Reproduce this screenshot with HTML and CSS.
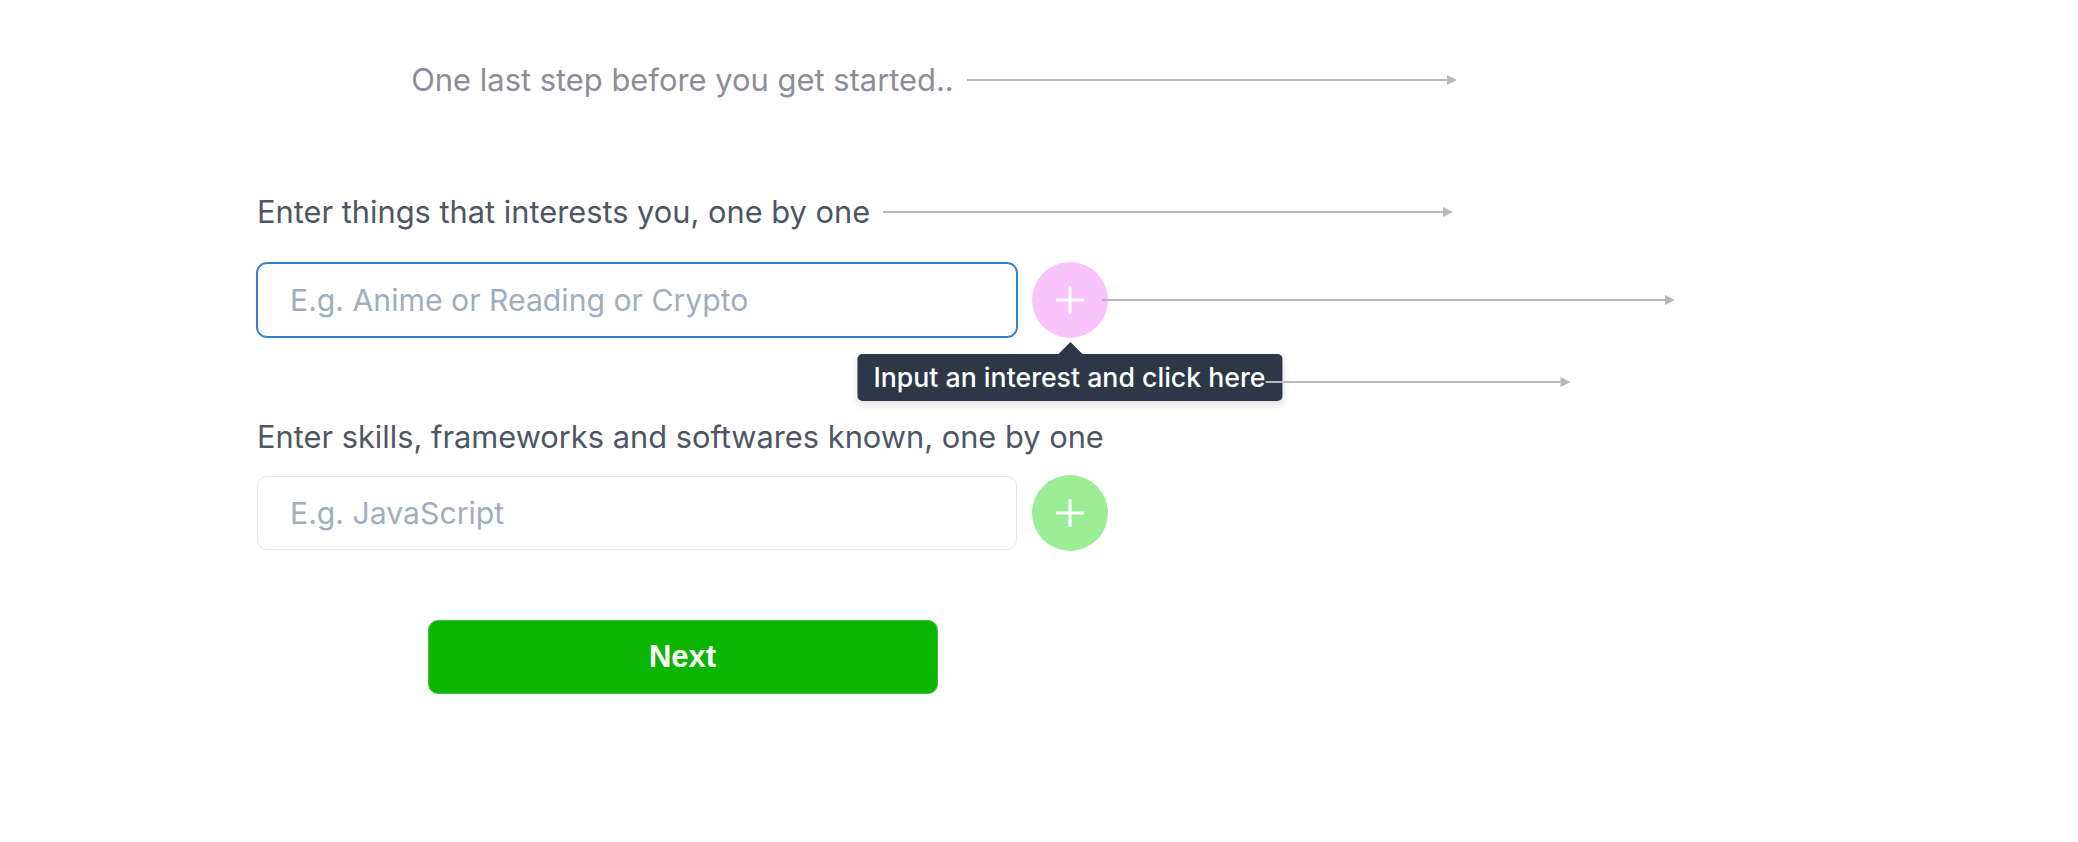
FILE: index.html
```html
<!DOCTYPE html>
<html lang="en">
<head>
<meta charset="utf-8">
<title>One last step</title>
<link rel="stylesheet" href="styles.css">
</head>
<body>
<main class="page">
  <form class="form" onsubmit="return false">
    <h2 class="intro"><span class="anchor">One last step before you get started..<span class="arrow arrow-intro"><i class="arrow-line"></i><i class="arrow-head"></i></span></span></h2>

    <section class="field field-interests">
      <label class="field-label" for="interest"><span class="anchor">Enter things that interests you, one by one<span class="arrow arrow-label"><i class="arrow-line"></i><i class="arrow-head"></i></span></span></label>
      <div class="field-row">
        <input id="interest" class="text-input is-focused" type="text" placeholder="E.g. Anime or Reading or Crypto">
        <button type="button" class="add-btn add-pink" aria-label="Add interest">
          <svg viewBox="0 0 30 30" width="30" height="30"><path d="M15 1v28M1 15h28" stroke="#fff" stroke-width="3" fill="none"/></svg>
          <span class="arrow arrow-btn"><i class="arrow-line"></i><i class="arrow-head"></i></span>
          <span class="tooltip" role="tooltip">Input an interest and click here<span class="arrow arrow-tip"><i class="arrow-line"></i><i class="arrow-head"></i></span></span>
        </button>
      </div>
    </section>

    <section class="field field-skills">
      <label class="field-label" for="skill">Enter skills, frameworks and softwares known, one by one</label>
      <div class="field-row">
        <input id="skill" class="text-input" type="text" placeholder="E.g. JavaScript">
        <button type="button" class="add-btn add-green" aria-label="Add skill">
          <svg viewBox="0 0 30 30" width="30" height="30"><path d="M15 1v28M1 15h28" stroke="#fff" stroke-width="3" fill="none"/></svg>
        </button>
      </div>
    </section>

    <div class="actions">
      <button type="submit" class="next-btn">Next</button>
    </div>
  </form>
</main>
</body>
</html>
```
FILE: styles.css
```css
* { box-sizing: border-box; }

html, body {
  margin: 0;
  padding: 0;
  background: #ffffff;
}

body {
  font-family: Inter, "Noto Sans", sans-serif;
  color: #4a5568;
}

.page {
  padding: 60px 0 0 257px;
}

.form {
  width: 851px;
  display: flex;
  flex-direction: column;
}

.intro {
  margin: 0;
  text-align: center;
  font-size: 30.9px;
  font-weight: 400;
  line-height: 40px;
  color: #8b8e97;
  white-space: nowrap;
}

.anchor {
  position: relative;
  display: inline-block;
  white-space: nowrap;
}

/* annotation arrows */
.arrow {
  position: absolute;
  display: flex;
  align-items: center;
  height: 12px;
  pointer-events: none;
}
.arrow-line {
  flex: 1;
  height: 2px;
  background: #b9b9b9;
}
.arrow-head {
  width: 0;
  height: 0;
  border-left: 10px solid #b9b9b9;
  border-top: 5px solid transparent;
  border-bottom: 5px solid transparent;
}
.arrow-intro {
  left: calc(100% + 13px);
  top: 50%;
  margin-top: -6px;
  width: 490px;
}
.arrow-label {
  left: calc(100% + 13px);
  top: 50%;
  margin-top: -6px;
  width: 570px;
}
.arrow-btn {
  left: calc(100% - 6px);
  top: 50%;
  margin-top: -6px;
  width: 573px;
}
.arrow-tip {
  left: calc(100% - 17px);
  top: 50%;
  margin-top: -2px;
  width: 305px;
}

.field {
  display: flex;
  flex-direction: column;
}
.field-interests { margin-top: 92px; }
.field-skills { margin-top: 79px; }

.field-label {
  font-size: 30.8px;
  line-height: 40px;
  color: #4f5564;
  margin-bottom: 30px;
  white-space: nowrap;
}
.field-skills .field-label { margin-bottom: 18px; }

.field-row {
  display: flex;
  align-items: center;
  gap: 15px;
  height: 76px;
}

.text-input {
  width: 760px;
  height: 74px;
  padding: 0 32px;
  border: 1px solid #e2e8f0;
  border-radius: 10px;
  font-family: Inter, "Noto Sans", sans-serif;
  font-size: 30.2px;
  color: #1a202c;
  background: #fff;
  outline: none;
}
.text-input::placeholder { color: #a0aec0; }
.text-input.is-focused {
  border-color: #3182ce;
  box-shadow: 0 0 0 1px #3182ce;
}

.add-btn {
  position: relative;
  width: 76px;
  height: 76px;
  flex: none;
  border: 0;
  border-radius: 50%;
  padding: 0;
  display: flex;
  align-items: center;
  justify-content: center;
  cursor: pointer;
}
.add-pink { background: #f9c3fc; }
.add-green { background: #9bee95; }

.tooltip {
  position: absolute;
  top: calc(100% + 16px);
  left: 50%;
  transform: translateX(-50%);
  white-space: nowrap;
  background: #2d3748;
  color: #ffffff;
  font-family: Inter, "Noto Sans", sans-serif;
  font-size: 26.7px;
  font-weight: 500;
  line-height: 47px;
  height: 47px;
  padding: 0 17px 0 16px;
  border-radius: 5px;
  box-shadow: 0 4px 8px rgba(0, 0, 0, 0.12);
}
.tooltip::before {
  content: "";
  position: absolute;
  left: 50%;
  top: -12px;
  margin-left: -12px;
  border-left: 12px solid transparent;
  border-right: 12px solid transparent;
  border-bottom: 12px solid #2d3748;
}

.actions {
  margin-top: 69px;
  display: flex;
  justify-content: center;
}

.next-btn {
  width: 510px;
  height: 74px;
  border: 1px solid #3fc63a;
  border-radius: 10px;
  background: #0cb500;
  color: #ffffff;
  font-family: "Liberation Sans", Arial, sans-serif;
  font-weight: 700;
  font-size: 31px;
  cursor: pointer;
}
```
